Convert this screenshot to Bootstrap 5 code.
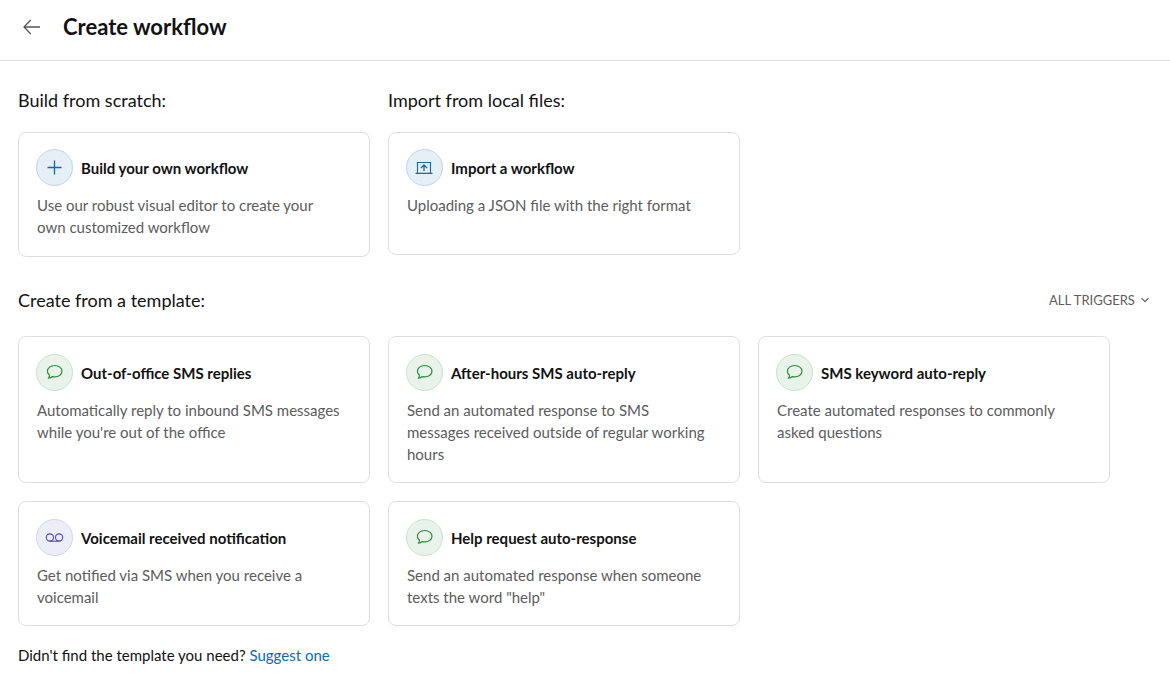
<!DOCTYPE html>
<html lang="en">
<head>
<meta charset="utf-8">
<meta name="viewport" content="width=device-width, initial-scale=1">
<title>Create workflow</title>
<link href="https://cdn.jsdelivr.net/npm/bootstrap@5.3.0/dist/css/bootstrap.min.css" rel="stylesheet">
<style>
  body { font-family: Lato, sans-serif; color: #121212; font-size: 15px; line-height: 22px; }
  .page-head { height: 61px; padding: 0 22px 6px; border-bottom: 1px solid #dedede; gap: 21px; }
  .page-title { font-size: 22px; line-height: 28px; font-weight: 700; }
  .page-body { padding: 27px 18px 16px; }
  .section-title { font-size: 18px; line-height: 24px; font-weight: 400; }
  .template-bar { margin: 31px 0 24px; }
  .tile-grid { display: grid; grid-template-columns: repeat(auto-fill, minmax(0, 352px)); gap: 18px; }
  .tile { border: 1px solid #dedede; border-radius: 8px; padding: 17px; min-height: 123px; color: #121212; text-decoration: none; }
  .tile-slim { padding-top: 16px; padding-bottom: 18px; }
  .tile-head { gap: 8px; margin-bottom: 8px; }
  .tile-name { font-size: 15px; line-height: 22px; font-weight: 700; }
  .tile-text { color: #5c5c5c; padding: 0 10px 0 1px; }
  .disc { width: 37px; height: 37px; border: 1px solid; flex: none; }
  .disc svg { fill: none; stroke: currentColor; }
  .disc-blue { color: #0b6bb0; background: #e6eef6; border-color: #bcd6eb; }
  .disc-green { color: #2a9035; background: #e9f3eb; border-color: #c6e3ca; }
  .disc-violet { color: #4c4ab8; background: #ededf8; border-color: #d3d3f0; }
  .trigger-select { appearance: none; font-size: 13px; line-height: 20px; color: #5c5c5c; padding: 0 16px 0 0; }
  .trigger-arrow { pointer-events: none; right: 3px; }
  .suggest { margin-top: 18px; }
  .suggest-link { color: #0b6bb0; }
  @media (max-width: 600px) { .tile-grid { grid-template-columns: 1fr; } }
</style>
</head>
<body class="bg-white">
<svg class="d-none" aria-hidden="true">
  <symbol id="bubble" viewBox="0 0 19 19"><path d="M4.400 12C3.200 11 2.400 9.700 2.400 8.200C2.400 5 5.600 2.500 9.700 2.500S17 5 17 8.200S13.800 13.900 9.700 13.900C8.900 13.900 8.200 13.800 7.500 13.600C6.300 14.500 4.900 15.100 3.300 15.200C4.100 14.300 4.700 13.200 4.400 12Z" stroke-width="1.200" stroke-linejoin="round"/></symbol>
</svg>

<header class="page-head d-flex align-items-center">
  <button type="button" class="btn p-0 border-0 d-flex" aria-label="Back">
    <svg width="20" height="20" viewBox="0 0 20 20" fill="none" stroke="#555" stroke-width="1.300"><path d="M18 10H2M8.800 3L2 10L8.800 17"/></svg>
  </button>
  <h1 class="page-title m-0">Create workflow</h1>
</header>

<main class="page-body">
  <div class="tile-grid align-items-start">
    <section>
      <h2 class="section-title mb-3 pb-1">Build from scratch:</h2>
      <a href="#" class="tile tile-slim d-block">
        <div class="tile-head d-flex align-items-center">
          <span class="disc disc-blue rounded-circle d-flex align-items-center justify-content-center"><svg width="19" height="19" viewBox="0 0 19 19" stroke-width="1.300"><path d="M9.500 2.500V16.500M2.500 9.500H16.500"/></svg></span>
          <h3 class="tile-name m-0">Build your own workflow</h3>
        </div>
        <p class="tile-text m-0">Use our robust visual editor to create your own customized workflow</p>
      </a>
    </section>
    <section>
      <h2 class="section-title mb-3 pb-1">Import from local files:</h2>
      <a href="#" class="tile tile-slim d-block">
        <div class="tile-head d-flex align-items-center">
          <span class="disc disc-blue rounded-circle d-flex align-items-center justify-content-center"><svg width="19" height="19" viewBox="0 0 19 19"><path d="M2.500 15V4.500H15.500V15" stroke-width="1.100"/><path d="M.5 15.300H17.500M9 13V7.200M5.900 10.100L9 7L12.100 10.100" stroke-width="1.300"/></svg></span>
          <h3 class="tile-name m-0">Import a workflow</h3>
        </div>
        <p class="tile-text m-0">Uploading a JSON file with the right format</p>
      </a>
    </section>
  </div>

  <div class="template-bar d-flex justify-content-between align-items-center">
    <h2 class="section-title m-0">Create from a template:</h2>
    <div class="position-relative d-flex align-items-center">
      <select class="trigger-select bg-transparent border-0" aria-label="Trigger filter"><option>ALL TRIGGERS</option></select>
      <svg class="trigger-arrow position-absolute" width="8" height="8" viewBox="0 0 8 8" fill="none" stroke="#5c5c5c" stroke-width="1.200"><path d="M.6 2.200L4 5.600L7.400 2.200"/></svg>
    </div>
  </div>

  <div class="tile-grid">
    <a href="#" class="tile">
      <div class="tile-head d-flex align-items-center">
        <span class="disc disc-green rounded-circle d-flex align-items-center justify-content-center"><svg width="19" height="19"><use href="#bubble"/></svg></span>
        <h3 class="tile-name m-0">Out-of-office SMS replies</h3>
      </div>
      <p class="tile-text m-0">Automatically reply to inbound SMS messages while you're out of the office</p>
    </a>
    <a href="#" class="tile">
      <div class="tile-head d-flex align-items-center">
        <span class="disc disc-green rounded-circle d-flex align-items-center justify-content-center"><svg width="19" height="19"><use href="#bubble"/></svg></span>
        <h3 class="tile-name m-0">After-hours SMS auto-reply</h3>
      </div>
      <p class="tile-text m-0">Send an automated response to SMS messages received outside of regular working hours</p>
    </a>
    <a href="#" class="tile">
      <div class="tile-head d-flex align-items-center">
        <span class="disc disc-green rounded-circle d-flex align-items-center justify-content-center"><svg width="19" height="19"><use href="#bubble"/></svg></span>
        <h3 class="tile-name m-0">SMS keyword auto-reply</h3>
      </div>
      <p class="tile-text m-0">Create automated responses to commonly asked questions</p>
    </a>
    <a href="#" class="tile">
      <div class="tile-head d-flex align-items-center">
        <span class="disc disc-violet rounded-circle d-flex align-items-center justify-content-center"><svg width="19" height="19" viewBox="0 0 19 19" stroke-width="1.100"><circle cx="4.900" cy="9.500" r="3.600"/><circle cx="14.100" cy="9.500" r="3.600"/><path d="M4.900 13.200H14.100"/></svg></span>
        <h3 class="tile-name m-0">Voicemail received notification</h3>
      </div>
      <p class="tile-text m-0">Get notified via SMS when you receive a voicemail</p>
    </a>
    <a href="#" class="tile">
      <div class="tile-head d-flex align-items-center">
        <span class="disc disc-green rounded-circle d-flex align-items-center justify-content-center"><svg width="19" height="19"><use href="#bubble"/></svg></span>
        <h3 class="tile-name m-0">Help request auto-response</h3>
      </div>
      <p class="tile-text m-0">Send an automated response when someone texts the word "help"</p>
    </a>
  </div>

  <p class="suggest mb-0">Didn't find the template you need? <a href="#" class="suggest-link text-decoration-none">Suggest one</a></p>
</main>
<script src="https://cdn.jsdelivr.net/npm/bootstrap@5.3.0/dist/js/bootstrap.bundle.min.js"></script>
</body>
</html>
